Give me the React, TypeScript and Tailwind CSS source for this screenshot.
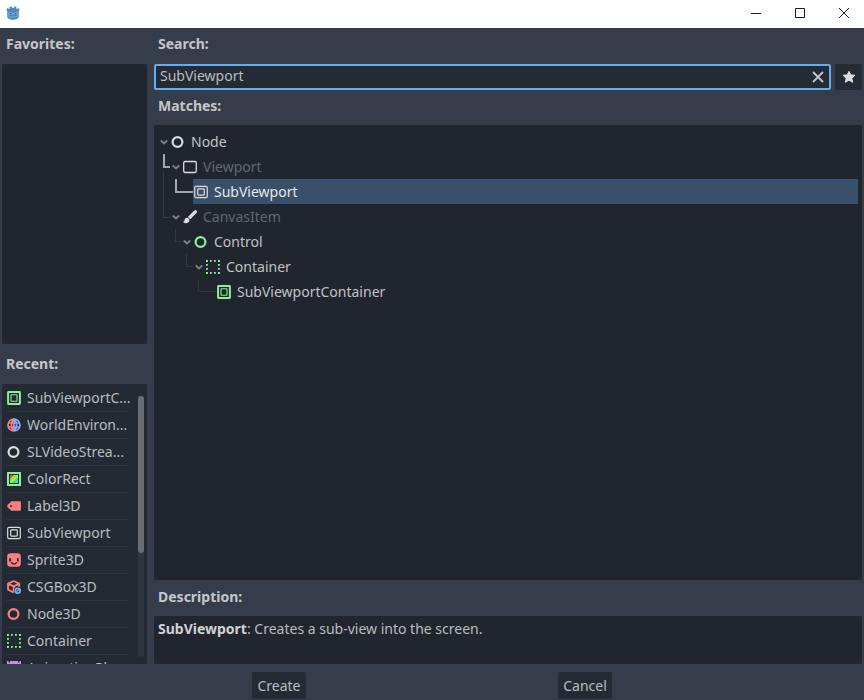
import { useState } from "react";
import type { ReactNode } from "react";

type IconName =
  | "node"
  | "viewport"
  | "subViewport"
  | "canvasItem"
  | "control"
  | "container"
  | "subViewportContainer"
  | "worldEnvironment"
  | "colorRect"
  | "label3d"
  | "sprite3d"
  | "csgBox"
  | "node3d"
  | "animationPlayer";

const GREY = "#dadcdf";
const GREEN = "#8eef97";
const RED = "#fc7f7f";

const icons: Record<IconName, ReactNode> = {
  node: <circle cx="6.500" cy="7" r="4.900" fill="none" stroke={GREY} strokeWidth="2.200" />,
  control: <circle cx="6.500" cy="7" r="4.900" fill="none" stroke={GREEN} strokeWidth="2.200" />,
  node3d: <circle cx="6.500" cy="7" r="4.900" fill="none" stroke={RED} strokeWidth="2.200" />,
  viewport: (
    <rect x="0.7" y="1.5" width="12.6" height="11" rx="1.4" fill="none" stroke={GREY} strokeWidth="1.3" />
  ),
  subViewport: (
    <g fill="none" stroke={GREY} strokeWidth="1.2">
      <rect x="0.7" y="1.4" width="12.6" height="11.2" rx="1.4" />
      <rect x="3.7" y="3.9" width="6.6" height="6.2" rx="0.8" />
    </g>
  ),
  subViewportContainer: (
    <g fill="none" stroke={GREEN}>
      <rect x="1.1" y="1.1" width="11.8" height="11.8" rx="0.4" strokeWidth="2" />
      <rect x="4" y="3.8" width="6" height="6.4" rx="0.5" strokeWidth="1.1" />
    </g>
  ),
  canvasItem: (
    <g fill={GREY}>
      <path d="M13.500.6c-.7-.7-1.800-.5-2.500.1L4.900 6.900l2.400 2.400 6.200-6.300c.6-.7.7-1.800 0-2.400z" />
      <path d="M4.300 7.800c-1.400-.2-2.500.6-2.700 2-.1 1-.6 1.700-1.500 2 .9 1.800 4.100 2 5.500.4 1-1.100 1-2.500.4-3.400z" />
    </g>
  ),
  container: (
    <g fill={GREEN}>
      {[0, 4, 8, 12].map((n) => (
        <g key={n}>
          <rect x={n} y="0" width="1.800" height="1.800" />
          <rect x={n} y="12" width="1.800" height="1.800" />
          <rect x="0" y={n} width="1.800" height="1.800" />
          <rect x="12" y={n} width="1.800" height="1.800" />
        </g>
      ))}
    </g>
  ),
  worldEnvironment: (
    <g fill="none" strokeWidth="1.700">
      <path stroke={RED} d="M7 1a6 6 0 0 0 0 12M7 1C3.500 4 3.500 10 7 13M1.500 5H7M1.500 9H7" />
      <path stroke="#8da5f3" d="M7 1a6 6 0 0 1 0 12M7 1c3.500 3 3.500 9 0 12M7 5h5.500M7 9h5.500M7 1v12" />
    </g>
  ),
  colorRect: (
    <g>
      <rect x="0" y="0" width="14" height="14" rx="0.500" fill={GREEN} />
      <rect x="2" y="2" width="10" height="10" fill="#233039" />
      <path fill="#ff4545" d="M3 3h4L3 7z" />
      <path fill="#ffe345" d="M7 3h1.500L3 8.500V7z" />
      <path fill="#80ff45" d="M8.500 3H11v2.500L5.500 11H3V8.500z" />
      <path fill="#45ffa2" d="M11 5.500V7l-4 4H5.500z" />
      <path fill="#45d7ff" d="M11 7v4H7z" />
    </g>
  ),
  label3d: (
    <path
      fill={RED}
      fillRule="evenodd"
      d="M4.500 2.200 0.300 6v2l4.200 3.800h8.600c.5 0 .8-.3.8-.8V3c0-.5-.3-.8-.8-.8zM4 6a1 1 0 1 1 0 2 1 1 0 0 1 0-2z"
    />
  ),
  sprite3d: (
    <g>
      <rect x="0.200" y="0.200" width="13.600" height="13.600" rx="3.200" fill={RED} />
      <rect x="2.200" y="5" width="1.900" height="3.600" rx="0.900" fill="#242a33" />
      <rect x="9.900" y="5" width="1.900" height="3.600" rx="0.900" fill="#242a33" />
      <path d="M4.500 9.600c1 1.900 4 1.900 5 0" fill="none" stroke="#242a33" strokeWidth="1.300" strokeLinecap="round" />
    </g>
  ),
  csgBox: (
    <g>
      <path
        d="M6.700 1 1.100 3.600v6l5.600 2.900M6.700 1l5.500 2.600v3.200M1.100 3.600l5.600 2.700 5.500-2.700M6.700 6.300v6.200"
        fill="none"
        stroke={RED}
        strokeWidth="1.900"
        strokeLinejoin="round"
      />
      <circle cx="10.600" cy="10.700" r="3.600" fill="#242a33" />
      <circle cx="10.700" cy="10.700" r="2.400" fill="none" stroke="#68b6ff" strokeWidth="1.700" />
      <path d="m9.200 12.200 3-3" stroke="#68b6ff" strokeWidth="1.200" />
    </g>
  ),
  animationPlayer: (
    <path
      fill="#c38ef1"
      fillRule="evenodd"
      d="M0 0h1.500v1.500H3V0h8v1.500h1.500V0H14v14h-1.500v-1.500H11V14H3v-1.500H1.500V14H0zM1.500 4v1.500H3V4zM11 4v1.500h1.500V4zM1.500 8v1.500H3V8zM11 8v1.500h1.500V8z"
    />
  ),
};

function NodeIcon({ name }: { name: IconName }) {
  return (
    <svg viewBox="0 0 14 14" className="size-3.5 shrink-0" aria-hidden="true">
      {icons[name]}
    </svg>
  );
}

interface TreeItem {
  name: string;
  icon: IconName;
  depth: number;
  disabled?: boolean;
  leaf?: boolean;
}

const matches: TreeItem[] = [
  { name: "Node", icon: "node", depth: 0 },
  { name: "Viewport", icon: "viewport", depth: 1, disabled: true },
  { name: "SubViewport", icon: "subViewport", depth: 2, leaf: true },
  { name: "CanvasItem", icon: "canvasItem", depth: 1, disabled: true },
  { name: "Control", icon: "control", depth: 2 },
  { name: "Container", icon: "container", depth: 3 },
  { name: "SubViewportContainer", icon: "subViewportContainer", depth: 4, leaf: true },
];

const recent: { name: string; icon: IconName }[] = [
  { name: "SubViewportC...", icon: "subViewportContainer" },
  { name: "WorldEnviron...", icon: "worldEnvironment" },
  { name: "SLVideoStrea...", icon: "node" },
  { name: "ColorRect", icon: "colorRect" },
  { name: "Label3D", icon: "label3d" },
  { name: "SubViewport", icon: "subViewport" },
  { name: "Sprite3D", icon: "sprite3d" },
  { name: "CSGBox3D", icon: "csgBox" },
  { name: "Node3D", icon: "node3d" },
  { name: "Container", icon: "container" },
  { name: "AnimationPl...", icon: "animationPlayer" },
];

function TitleBar() {
  return (
    <header className="flex h-7 shrink-0 items-center justify-between bg-white pl-1.5 text-[#1b1b1b]">
      <svg viewBox="0 0 14 14" className="mb-0.5 size-3.5" aria-hidden="true">
        <path
          fill="#478cbf"
          d="M5.300.3 3.500.9l.2 1.500-.9.500-1.200-.900L.3 3.500l.9 1.200v5.800C1.200 12.500 4 13.700 7 13.700s5.800-1.200 5.800-3.200V4.700l.9-1.200L12.400 2l-1.200.9-.9-.5.2-1.500L8.700.3 8 1.800H6z"
        />
        <circle cx="4" cy="7.300" r="1.500" fill="#a9c9e0" />
        <circle cx="10" cy="7.300" r="1.500" fill="#a9c9e0" />
        <circle cx="4.200" cy="7.400" r="1" fill="#515b66" />
        <circle cx="9.800" cy="7.400" r="1" fill="#515b66" />
        <path d="M7 7v1.800" stroke="#a9c9e0" strokeWidth="1" />
        <path d="M1.300 9.800h2.300v1.300h2V10.300h2.800v.8h2V9.800h2.300" fill="none" stroke="#8fbbdb" strokeWidth=".6" />
      </svg>
      <div className="-mr-0.5 flex h-full pb-0.5">
        <button type="button" aria-label="Minimize" className="flex w-11 items-center justify-center">
          <svg viewBox="0 0 12 12" className="size-3" fill="none" stroke="currentColor" aria-hidden="true">
            <path d="M1 6.500h10" />
          </svg>
        </button>
        <button type="button" aria-label="Maximize" className="flex w-11 items-center justify-center">
          <svg viewBox="0 0 12 12" className="size-3" fill="none" stroke="currentColor" aria-hidden="true">
            <path d="M1.500 1.500h9v9h-9z" />
          </svg>
        </button>
        <button type="button" aria-label="Close" className="flex w-11 items-center justify-center">
          <svg viewBox="0 0 12 12" className="size-3" fill="none" stroke="currentColor" aria-hidden="true">
            <path d="m1 1 10 10M11 1 1 11" />
          </svg>
        </button>
      </div>
    </header>
  );
}

function TreeGuides() {
  return (
    <svg
      className="pointer-events-none absolute top-0 left-0 h-48 w-20"
      viewBox="0 0 80 192"
      fill="none"
      aria-hidden="true"
    >
      <path stroke="#343941" d="M9.500 46v46.500H16M21.500 104v12.500H28M32.500 129v12.500H39M44.500 155v11.500H62" />
      <path stroke="#a3a6aa" strokeWidth="2" d="M10 29v13h6M22 54v13h17" />
    </svg>
  );
}

function MatchTree() {
  const [selected, setSelected] = useState("SubViewport");

  return (
    <div className="relative min-h-0 flex-1 overflow-hidden rounded-xs bg-[#21262e] py-1 pr-1 pl-1.5">
      <TreeGuides />
      <ul role="tree" aria-label="Matches">
        {matches.map((item) => (
          <li
            key={item.name}
            role="treeitem"
            aria-level={item.depth + 1}
            aria-selected={selected === item.name}
            onClick={() => setSelected(item.name)}
            className="flex h-[25px]"
            style={{ paddingLeft: Math.round(item.depth * 11.5) }}
          >
            <span className="flex w-2.5 shrink-0 items-center">
              {!item.leaf && (
                <svg
                  viewBox="0 0 8 8"
                  className="size-2"
                  fill="none"
                  stroke="#7b7e83"
                  strokeWidth="1.900"
                  aria-hidden="true"
                >
                  <path d="m0.800 2.500 3.200 3 3.200-3" />
                </svg>
              )}
            </span>
            <span
              className={`flex flex-1 items-center gap-1.5 pl-px ${
                selected === item.name
                  ? "bg-[#385069] text-[#e6e9ec]"
                  : item.disabled
                    ? "text-[#62666d]"
                    : "text-[#c0c2c5]"
              }`}
            >
              <NodeIcon name={item.icon} />
              {item.name}
            </span>
          </li>
        ))}
      </ul>
    </div>
  );
}

function RecentList() {
  return (
    <div className="flex min-h-0 flex-1 basis-0 justify-between overflow-hidden rounded-xs bg-[#242a33] pr-[3px] pl-1">
      <ul className="w-[122px] pt-px">
        {recent.map((item) => (
          <li
            key={item.name}
            className="flex h-[27px] items-center gap-1.5 border-b border-[#2f353f] pl-px whitespace-nowrap text-[#b9bcc0]"
          >
            <NodeIcon name={item.icon} />
            {item.name}
          </li>
        ))}
      </ul>
      <div className="mt-3 mb-[7px] w-1.5 rounded-full bg-[#2f353f]">
        <div className="h-3/5 rounded-full bg-[#6a6e74]" />
      </div>
    </div>
  );
}

export default function App() {
  const [query, setQuery] = useState("SubViewport");

  return (
    <div className="flex h-screen flex-col bg-[#363d4a] font-['Noto_Sans',sans-serif] text-sm text-[#c4c7ca]">
      <TitleBar />
      <main className="flex min-h-0 flex-1 gap-[7px] px-0.5">
        <aside className="flex w-[145px] shrink-0 flex-col">
          <h2 className="flex h-9 shrink-0 items-center pb-1 pl-1 font-bold">Favorites:</h2>
          <div className="flex-1 basis-0 rounded-xs bg-[#21262e]" />
          <h2 className="flex h-10 shrink-0 items-center pl-1 font-bold">Recent:</h2>
          <RecentList />
        </aside>
        <section className="flex min-w-0 flex-1 flex-col">
          <label htmlFor="search" className="flex h-9 shrink-0 items-center pb-1 pl-1 font-bold">
            Search:
          </label>
          <div className="flex h-[26px] shrink-0 gap-1">
            <div className="relative flex flex-1">
              <input
                id="search"
                value={query}
                onChange={(e) => setQuery(e.target.value)}
                className="w-full rounded-xs border-2 border-[#62aeee] bg-[#252b34] pr-7 pb-0.5 pl-1 text-[#b9bcc0] outline-none"
              />
              <button
                type="button"
                aria-label="Clear"
                onClick={() => setQuery("")}
                className="absolute inset-y-0 right-0 flex w-[26px] items-center justify-center"
              >
                <svg viewBox="0 0 12 12" className="size-3" fill="none" stroke="#c4c7ca" strokeWidth="1.800" aria-hidden="true">
                  <path d="m1 1 10 10M11 1 1 11" />
                </svg>
              </button>
            </div>
            <button
              type="button"
              aria-label="Favorite"
              className="flex w-[27px] items-center justify-center rounded-xs bg-[#252b34]"
            >
              <svg viewBox="0 0 14 14" className="size-3.5" aria-hidden="true">
                <path
                  fill={GREY}
                  stroke={GREY}
                  strokeLinejoin="round"
                  d="m7 1.300 1.700 3.600 4.300.4-3.200 2.800.9 4.200L7 10.200l-3.700 2.100.9-4.200L1 5.300l4.300-.4z"
                />
              </svg>
            </button>
          </div>
          <h2 className="flex h-[35px] shrink-0 items-center pb-1 pl-1 font-bold">Matches:</h2>
          <MatchTree />
          <h2 className="flex h-9 shrink-0 items-center pb-0.5 pl-1 font-bold">Description:</h2>
          <p className="h-12 shrink-0 rounded-xs bg-[#21262e] px-1 py-[3px] text-[#b9bcc0]">
            <b className="text-[#d0d2d5]">SubViewport</b>: Creates a sub-view into the screen.
          </p>
        </section>
      </main>
      <footer className="flex shrink-0 justify-evenly pt-2 pb-px">
        <button type="button" className="h-[27px] w-[54px] rounded-xs bg-[#252b34] text-[#b9bcc0]">
          Create
        </button>
        <button type="button" className="h-[27px] w-[54px] rounded-xs bg-[#252b34] text-[#b9bcc0]">
          Cancel
        </button>
      </footer>
    </div>
  );
}
